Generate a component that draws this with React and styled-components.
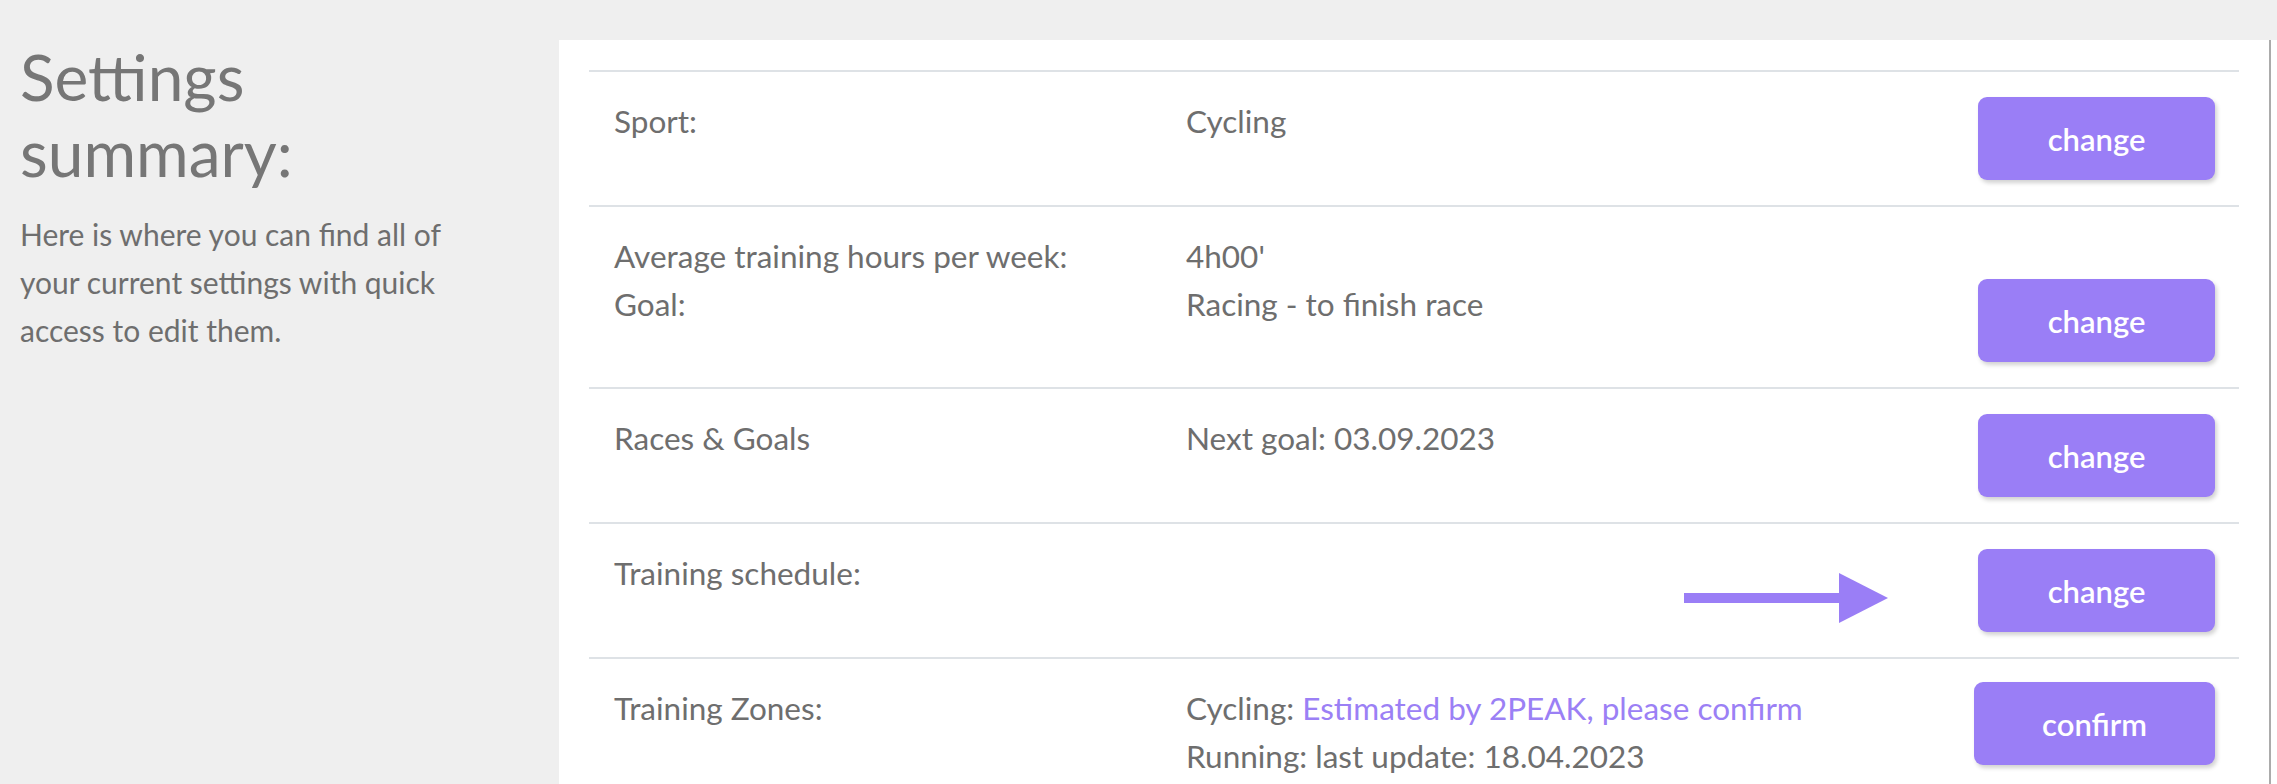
import styled, { createGlobalStyle } from 'styled-components'

const font = `Lato, "Open Sans", "Liberation Sans", sans-serif`;
const purple = '#9a7ef6';

const GlobalStyle = createGlobalStyle`
    html, body {
        margin: 0;
        padding: 0;
        background: #efefef;
    }
    body {
        font-family: ${font};
    }
`

const rows = [
    { label: ['Sport:'], values: [['Cycling']], action: 'change' },
    {
        label: ['Average training hours per week:', 'Goal:'],
        values: [["4h00'"], ['Racing - to finish race']],
        action: 'change',
    },
    { label: ['Races & Goals'], values: [['Next goal: 03.09.2023']], action: 'change' },
    { label: ['Training schedule:'], values: [], action: 'change', arrow: true },
    {
        label: ['Training Zones:'],
        values: [
            ['Cycling: ', 'Estimated by 2PEAK, please confirm'],
            ['Running: last update: 18.04.2023'],
        ],
        action: 'confirm',
        top: true,
    },
]

function Arrow() {
    return (
        <ArrowMark width="204" height="50" viewBox="0 0 204 50">
            <rect x="0" y="20" width="156" height="10" fill={purple} />
            <polygon points="155,0 204,25 155,50" fill={purple} />
        </ArrowMark>
    )
}

function App() {
    return (
        <>
            <GlobalStyle />
            <Page>
                <Intro>
                    <Title>Settings summary:</Title>
                    <Description>
                        Here is where you can find all of your current settings with quick access to edit them.
                    </Description>
                </Intro>
                <Panel>
                    <Content>
                        <List>
                            {rows.map((row, i) => (
                                <Row key={i}>
                                    <Label>
                                        {row.label.map((l) => (
                                            <Line key={l}>{l}</Line>
                                        ))}
                                    </Label>
                                    <Value>
                                        {row.values.map((v, j) => (
                                            <Line key={j}>
                                                {v[0]}
                                                {v[1] && <Highlight>{v[1]}</Highlight>}
                                            </Line>
                                        ))}
                                    </Value>
                                    <Actions $top={row.top}>
                                        {row.arrow && <Arrow />}
                                        <Button $wide={row.action === 'confirm'}>{row.action}</Button>
                                    </Actions>
                                </Row>
                            ))}
                        </List>
                    </Content>
                    <ScrollEdge />
                </Panel>
            </Page>
        </>
    )
}

const Page = styled.div`
    display: flex;
    padding-top: 40px;
    min-height: 744px;
`

const Intro = styled.div`
    width: 559px;
    flex-shrink: 0;
    box-sizing: border-box;
    padding: 0 59px 0 20px;
`

const Title = styled.h1`
    margin: -1px 0 0;
    font-family: ${font};
    font-weight: 400;
    font-size: 64px;
    line-height: 76px;
    color: #767676;
`

const Description = styled.p`
    margin: 19px 0 0;
    font-size: 30px;
    line-height: 48px;
    color: #6e6e6e;
`

const Panel = styled.div`
    flex: 1;
    display: flex;
    background: #ffffff;
`

const Content = styled.div`
    flex: 1;
    padding: 30px 30px 0;
`

const ScrollEdge = styled.div`
    width: 6px;
    border-left: 2px solid #ababab;
`

const List = styled.div`
    display: flex;
    flex-direction: column;
`

const Row = styled.div`
    display: flex;
    align-items: flex-start;
    border-top: 2px solid #dee2e6;
    padding: 25px 24px 25px 25px;
    font-size: 31.5px;
    line-height: 48px;
    color: #6e6e6e;
`

const Label = styled.div`
    width: 572px;
    flex-shrink: 0;
    margin-bottom: 34px;
`

const Value = styled.div`
    flex: 1;
    margin-bottom: 34px;
`

const Line = styled.div`
    white-space: nowrap;
`

const Highlight = styled.span`
    color: #9b80f5;
`

const Actions = styled.div`
    display: flex;
    align-items: flex-end;
    align-self: ${(p) => (p.$top ? 'flex-start' : 'flex-end')};
    margin-top: ${(p) => (p.$top ? '-2px' : '0')};
`

const ArrowMark = styled.svg`
    display: block;
    margin: 0 90px 9px 0;
`

const Button = styled.button`
    font-family: ${font};
    font-size: 31px;
    font-weight: 600;
    color: #ffffff;
    background: ${purple};
    border: none;
    border-radius: 9px;
    height: 83px;
    padding: 0 66px;
    min-width: ${(p) => (p.$wide ? '241px' : '237px')};
    box-shadow: 2px 3px 4px rgba(0, 0, 0, 0.18);
    cursor: pointer;
`

export default App;
